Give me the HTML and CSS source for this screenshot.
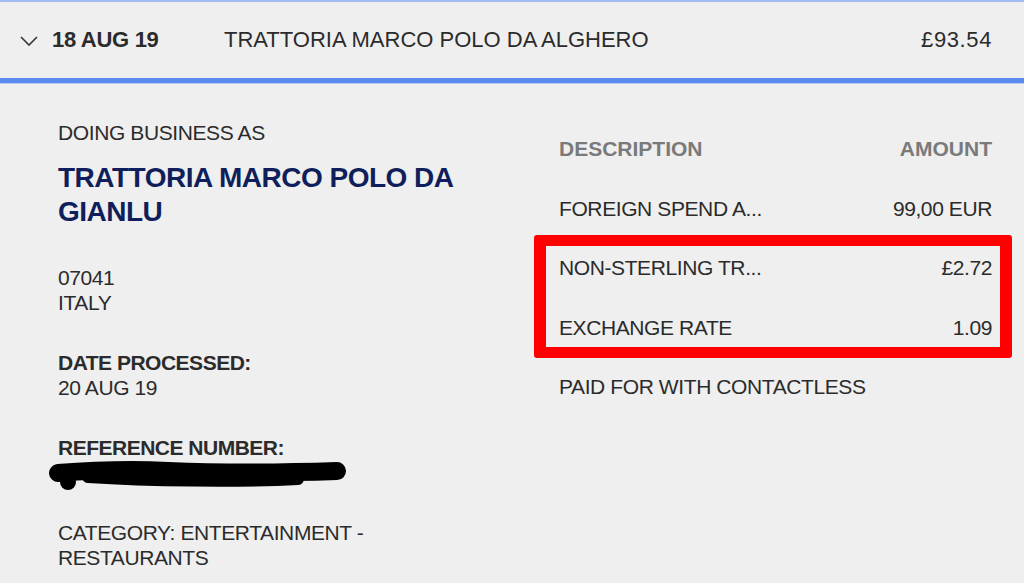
FILE: index.html
```html
<!DOCTYPE html>
<html>
<head>
<meta charset="utf-8">
<link rel="stylesheet" href="styles.css">
</head>
<body>
<div class="txn">
  <div class="txn-head">
    <svg class="chev" width="18" height="10" viewBox="0 0 18 10"><path d="M1 1 L9 9 L17 1" fill="none" stroke="#333" stroke-width="1.6"/></svg>
    <span class="date">18 AUG 19</span>
    <span class="merchant">TRATTORIA MARCO POLO DA ALGHERO</span>
    <span class="amount">£93.54</span>
  </div>
  <div class="txn-body">
    <div class="info">
      <div class="label-dba">DOING BUSINESS AS</div>
      <div class="biz">TRATTORIA MARCO POLO DA GIANLU</div>
      <div class="block">
        <div>07041</div>
        <div>ITALY</div>
      </div>
      <div class="block">
        <div class="strong">DATE PROCESSED:</div>
        <div>20 AUG 19</div>
      </div>
      <div class="block">
        <div class="strong">REFERENCE NUMBER:</div>
        <svg class="redact" width="300" height="32" viewBox="0 0 300 32">
          <path d="M10 13 C50 10 80 9 120 11 C170 13 230 13 289 11" fill="none" stroke="#000" stroke-width="18" stroke-linecap="round"/>
          <circle cx="20" cy="22" r="8" fill="#000"/>
          <path d="M40 17 C100 21 190 22 250 19" fill="none" stroke="#000" stroke-width="12" stroke-linecap="round"/>
        </svg>
      </div>
      <div class="block">
        <div>CATEGORY: ENTERTAINMENT -</div>
        <div>RESTAURANTS</div>
      </div>
    </div>
    <div class="charges">
      <div class="row head"><span>DESCRIPTION</span><span>AMOUNT</span></div>
      <div class="row"><span>FOREIGN SPEND A...</span><span>99,00 EUR</span></div>
      <div class="marked">
        <div class="row"><span>NON-STERLING TR...</span><span>£2.72</span></div>
        <div class="row"><span>EXCHANGE RATE</span><span>1.09</span></div>
      </div>
      <div class="row"><span>PAID FOR WITH CONTACTLESS</span><span></span></div>
    </div>
  </div>
</div>
</body>
</html>
```
FILE: styles.css
```css
html, body {
  margin: 0;
  padding: 0;
  background: #efefef;
}
body {
  width: 1024px;
  height: 583px;
  overflow: hidden;
  font-family: "Liberation Sans", Arial, sans-serif;
  font-size: 21px;
  color: #2b2b2b;
}
.txn-head {
  display: flex;
  align-items: center;
  height: 76px;
  border-top: 2px solid #a3bdf3;
  border-bottom: 5px solid #5b8bef;
  box-shadow: 0 1px 0 #b9cdf6;
  padding: 0 32px 0 20px;
  font-size: 22px;
}
.chev {
  display: block;
  margin-top: 1px;
}
.date {
  font-weight: bold;
  letter-spacing: -0.3px;
  margin-left: 14px;
  width: 172px;
}
.merchant {
  flex: 1;
}
.amount {
  text-align: right;
  letter-spacing: 0.6px;
}
.txn-body {
  display: flex;
  padding: 38px 32px 0 58px;
}
.info {
  width: 501px;
  line-height: 25px;
  letter-spacing: -0.4px;
}
.label-dba {
  line-height: 24px;
}
.biz {
  margin-top: 16px;
  font-size: 28px;
  line-height: 34px;
  font-weight: bold;
  letter-spacing: -0.5px;
  color: #101f5b;
  width: 420px;
}
.block {
  margin-top: 36px;
}
.block + .block {
  margin-top: 35px;
}
.strong {
  font-weight: bold;
  letter-spacing: -0.5px;
}
.redact {
  display: block;
  margin-left: -10px;
  margin-bottom: -7px;
}
.charges {
  flex: 1;
  padding-top: 16px;
  line-height: 24px;
}
.row {
  display: flex;
  justify-content: space-between;
  height: 59.5px;
  letter-spacing: -0.4px;
}
.row.head {
  color: #7a7a7a;
  font-weight: bold;
  letter-spacing: 0;
}
.marked {
  position: relative;
}
.marked::after {
  content: "";
  position: absolute;
  top: -21px;
  bottom: 17px;
  left: -25px;
  right: -20px;
  border: 11px solid #ff0000;
  border-width: 11px 12px;
  border-radius: 3px;
}
```
